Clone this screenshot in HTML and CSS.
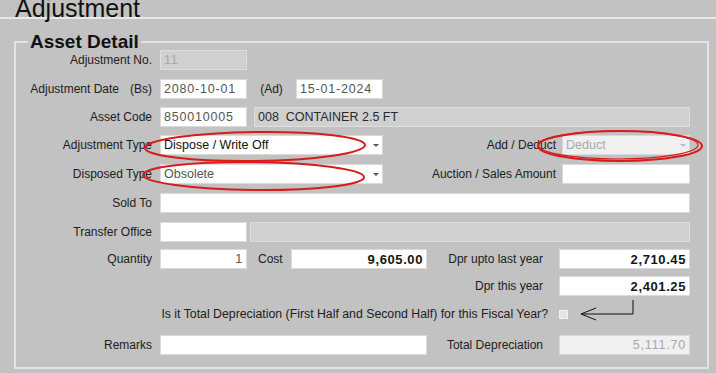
FILE: index.html
```html
<!DOCTYPE html>
<html>
<head>
    <title>Adjustment</title>
    <link rel="stylesheet" href="styles.css">
</head>
<body>

<h1 class="title">Adjustment</h1>

<fieldset class="detail">
    <legend>Asset Detail</legend>

    <div class="form">
        <div class="row">
            <span class="lbl">Adjustment No.</span>
            <input class="fld short off num" value="11" readonly>
        </div>

        <div class="row">
            <span class="lbl">Adjustment Date<span class="unit">(Bs)</span></span>
            <input class="fld short num" value="2080-10-01">
            <span class="mid">(Ad)</span>
            <input class="fld short num" value="15-01-2024">
        </div>

        <div class="row">
            <span class="lbl">Asset Code</span>
            <input class="fld short num" value="850010005">
            <input class="fld grow off dark gap7" value="008  CONTAINER 2.5 FT" readonly>
        </div>

        <div class="row">
            <span class="lbl">Adjustment Type</span>
            <div class="combo wide"><span class="val strong">Dispose / Write Off</span><span class="caret"></span></div>
            <span class="rlbl">Add / Deduct</span>
            <div class="combo narrow faded"><span class="val">Deduct</span><span class="caret"></span></div>
        </div>

        <div class="row">
            <span class="lbl">Disposed Type</span>
            <div class="combo wide"><span class="val">Obsolete</span><span class="caret"></span></div>
            <span class="rlbl">Auction / Sales Amount</span>
            <input class="fld narrow" value="">
        </div>

        <div class="row">
            <span class="lbl">Sold To</span>
            <input class="fld grow" value="">
        </div>

        <div class="row">
            <span class="lbl">Transfer Office</span>
            <input class="fld short" value="">
            <input class="fld grow off gap3" value="" readonly>
        </div>

        <div class="row">
            <span class="lbl">Quantity</span>
            <input class="fld short num right" value="1">
            <span class="cost">Cost</span>
            <input class="fld mid-w amount" value="9,605.00">
            <span class="rlbl gap16">Dpr upto last year</span>
            <input class="fld money amount" value="2,710.45">
        </div>

        <div class="row end">
            <span class="rlbl gap16">Dpr this year</span>
            <input class="fld money amount" value="2,401.25">
        </div>

        <div class="row end check-row">
            <span class="question">Is it Total Depreciation (First Half and Second Half) for this Fiscal Year?</span>
            <span class="check"></span>
        </div>

        <div class="row">
            <span class="lbl">Remarks</span>
            <input class="fld remarks" value="">
            <span class="rlbl gap16">Total Depreciation</span>
            <input class="fld money num right faded" value="5,111.70" readonly>
        </div>
    </div>
</fieldset>

<!-- red marks drawn over the screen -->
<svg class="marks" width="716" height="373" viewBox="0 0 716 373">
    <ellipse cx="255" cy="146.5" rx="110" ry="14.5" transform="rotate(-0.8 255 146.5)"/>
    <ellipse cx="253.5" cy="176" rx="110.5" ry="14" transform="rotate(0.6 253.5 176)"/>
    <ellipse cx="620" cy="146" rx="82" ry="15"/>
    <ellipse cx="618" cy="145" rx="80" ry="14" class="thin"/>
    <polyline class="arrow" points="633,300 633,314 581,314"/>
    <polyline class="arrow" points="596,308 581,314 596,320"/>
</svg>

</body>
</html>
```

FILE: styles.css
```css
body {
    margin: 0;
    position: relative;
    background: #c2c2c2;
    font-family: "Liberation Sans", Arial, sans-serif;
    font-size: 12px;
    color: #202020;
    overflow: hidden;
}

.title {
    margin: 0;
    padding-left: 15px;
    font-size: 25px;
    font-weight: normal;
    line-height: 17px;
    color: #111;
    border-bottom: 2px solid #e8e8e8;
}

.detail {
    box-sizing: border-box;
    width: 695px;
    margin: 15px 0 0 14px;
    padding: 0 17px 12px 0;
    border: 2px solid #e2e3e9;
}

.detail legend {
    margin-left: 12px;
    padding: 0 2px;
    font-size: 19px;
    font-weight: bold;
    line-height: 16px;
    color: #111;
}

.form {
    display: grid;
    grid-template-rows: 29px 28px 28px 29px 29px 29px 27px 27px 28px 31px 20px;
}

.row {
    display: flex;
    align-items: flex-start;
    line-height: 20px;
}

.row.end {
    justify-content: flex-end;
}

.lbl {
    width: 136px;
    margin-right: 8px;
    text-align: right;
    flex: none;
}

.unit {
    margin-left: 11px;
}

.rlbl {
    flex: 1;
    text-align: right;
    margin-right: 6px;
}

.rlbl.gap16 {
    margin-right: 16px;
}

.end .rlbl {
    flex: none;
}

.mid {
    width: 49px;
    text-align: center;
    flex: none;
}

.cost {
    width: 33px;
    padding-left: 11px;
    flex: none;
}

/* fields */

.fld, .combo {
    box-sizing: border-box;
    height: 20px;
    margin: 0;
    padding: 0 3px;
    border: 1px solid #dadada;
    background: #fff;
    font-family: "Liberation Sans", Arial, sans-serif;
    font-size: 12.5px;
    color: #555;
    outline: none;
    flex: none;
}

.short { width: 87px; }
.narrow { width: 128px; }
.money { width: 131px; }
.mid-w { width: 136px; }
.wide { width: 223px; }
.remarks { width: 267px; }
.grow { flex: 1; min-width: 0; }

.gap7 { margin-left: 7px; }
.gap3 { margin-left: 3px; }

.off {
    background: #d0d0d0;
    border-color: #dedede;
    color: #a8a8a8;
}

.off.dark {
    color: #2a2a2a;
}

.num {
    letter-spacing: 0.8px;
}

.right {
    text-align: right;
}

.amount {
    text-align: right;
    font-size: 13px;
    font-weight: bold;
    letter-spacing: 0.6px;
    color: #151515;
}

.faded {
    background: #f0f0f0;
    color: #a6a6a6;
}

.combo {
    display: flex;
    align-items: center;
    padding-right: 0;
    line-height: 18px;
}

.combo .val {
    flex: 1;
    color: #555;
}

.combo .val.strong {
    color: #111;
}

.combo.faded .val {
    color: #a8a8a8;
}

.caret {
    width: 13px;
    height: 18px;
    position: relative;
}

.caret::after {
    content: "";
    position: absolute;
    left: 4px;
    top: 8px;
    border-left: 3px solid transparent;
    border-right: 3px solid transparent;
    border-top: 3px solid #555;
}

.faded .caret::after {
    border-top-color: #bdbdbd;
}

.check-row {
    padding-right: 122px;
}

.question {
    margin-right: 11px;
    font-size: 12.3px;
}

.check {
    box-sizing: border-box;
    width: 9px;
    height: 9px;
    margin-top: 6px;
    background: #e4e4e4;
    border: 1px solid #f2f2f2;
}

/* annotations */

.marks {
    position: absolute;
    left: 0;
    top: 0;
    pointer-events: none;
}

.marks ellipse {
    fill: none;
    stroke: #d81c1c;
    stroke-width: 2;
}

.marks ellipse.thin {
    stroke-width: 1.2;
}

.marks .arrow {
    fill: none;
    stroke: #111;
    stroke-width: 1;
}
```
